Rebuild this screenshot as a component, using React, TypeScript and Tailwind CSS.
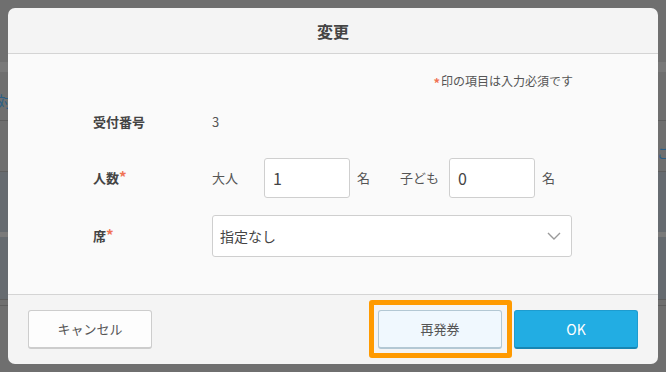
export default function App() {
  const font = { fontFamily: '"Noto Sans CJK JP", "Noto Sans", sans-serif' };

  return (
    <div className="relative w-[666px] h-[372px] overflow-hidden bg-[#6f6f6f]" style={font}>
      {/* Page behind the overlay */}
      <div className="flex flex-col">
        <div className="h-[62px]" />
        <div className="h-[10px] bg-[#797979]" />
        <div className="h-[48px] flex items-center justify-between text-[15px] text-[#2a5f86]">
          <span className="-ml-[3px] mt-[10px]">対</span>
          <span />
        </div>
        <div className="h-px bg-[#5e5e5e]" />
        <div className="h-[50px] flex items-center justify-end text-[13px] text-[#2a5f86]">
          <span className="-mr-[4px] mt-[14px]">こ</span>
        </div>
        <div className="h-px bg-[#5e5e5e]" />
        <div className="h-[60px] bg-[#666b70]" />
        <div className="h-[5px] bg-[#7a7a7a]" />
        <div className="h-[62px] bg-[#666b70]" />
        <div className="h-px bg-[#5e5e5e]" />
        <div className="h-[5px]" />
        <div className="h-px bg-[#5e5e5e]" />
      </div>

      {/* Modal */}
      <div className="absolute left-[8px] top-[8px] w-[650px] h-[356px] rounded-[7px] overflow-hidden flex flex-col">
        <div className="h-[46px] shrink-0 bg-[#f4f4f4] border-b border-[#d4d4d4] flex items-center justify-center">
          <span className="text-[16px] font-bold text-[#444]">変更</span>
        </div>

        <div className="flex-1 bg-[#fafafa] px-[85px] pt-[19px]">
          <div className="h-[16px] flex justify-end items-center text-[12px] leading-[16px] text-[#555]">
            <span className="text-[#f07355] text-[13px] leading-none font-bold mt-[3px] mr-px">*</span>
            <span>印の項目は入力必須です</span>
          </div>

          <div className="mt-[21px] h-[24px] flex items-center text-[13px]">
            <span className="w-[119px] font-bold text-[#444]">受付番号</span>
            <span className="text-[#555]">3</span>
          </div>

          <div className="mt-[24px] h-[40px] flex items-center text-[13px] text-[#555]">
            <span className="w-[119px] font-bold text-[#444] leading-[20px]">
              人数<span className="text-[#f07355] text-[15px] leading-none">*</span>
            </span>
            <span className="w-[52px]">大人</span>
            <div className="w-[86px] h-[40px] bg-white border border-[#cfcfcf] rounded-[3px] flex items-center px-[8px] text-[16px] text-[#444]">
              1
            </div>
            <span className="ml-[7px]">名</span>
            <span className="ml-[30px]">子ども</span>
            <div className="ml-[10px] w-[86px] h-[40px] bg-white border border-[#cfcfcf] rounded-[3px] flex items-center px-[8px] text-[16px] text-[#444]">
              0
            </div>
            <span className="ml-[7px]">名</span>
          </div>

          <div className="mt-[17px] h-[42px] flex items-center text-[13px]">
            <span className="w-[119px] font-bold text-[#444] leading-[20px]">
              席<span className="text-[#f07355] text-[15px] leading-none">*</span>
            </span>
            <div className="w-[360px] h-[42px] bg-white border border-[#cfcfcf] rounded-[3px] flex items-center justify-between pl-[7px] pr-[10px] text-[14px] text-[#444]">
              <span>指定なし</span>
              <svg width="14" height="8" viewBox="0 0 14 8" fill="none">
                <path d="M1 1l6 6 6-6" stroke="#9a9a9a" strokeWidth="1.4" />
              </svg>
            </div>
          </div>
        </div>

        <div className="h-[70px] shrink-0 bg-[#f4f4f4] border-t border-[#d4d4d4] flex items-start justify-between px-[20px] pt-[15px]">
          <button className="w-[124px] h-[39px] bg-[#fdfdfd] border border-[#cdcdcd] border-b-[2px] rounded-[3px] text-[13px] text-[#555]">
            キャンセル
          </button>
          <div className="flex gap-[12px]">
            <div className="relative">
              <button className="w-[124px] h-[39px] bg-[#f0f8fe] border border-[#b3c8d4] border-b-[2px] rounded-[3px] text-[13px] text-[#555]">
                再発券
              </button>
              <div className="absolute -left-[9px] -top-[10px] -right-[10px] -bottom-[9px] border-[5px] border-[#ff9a00] rounded-[3px]" />
            </div>
            <button className="w-[124px] h-[39px] bg-[#22ade3] border border-[#1e9ccf] border-b-[2px] border-b-[#1886b3] rounded-[3px] text-[14px] text-white">
              OK
            </button>
          </div>
        </div>
      </div>
    </div>
  );
}
